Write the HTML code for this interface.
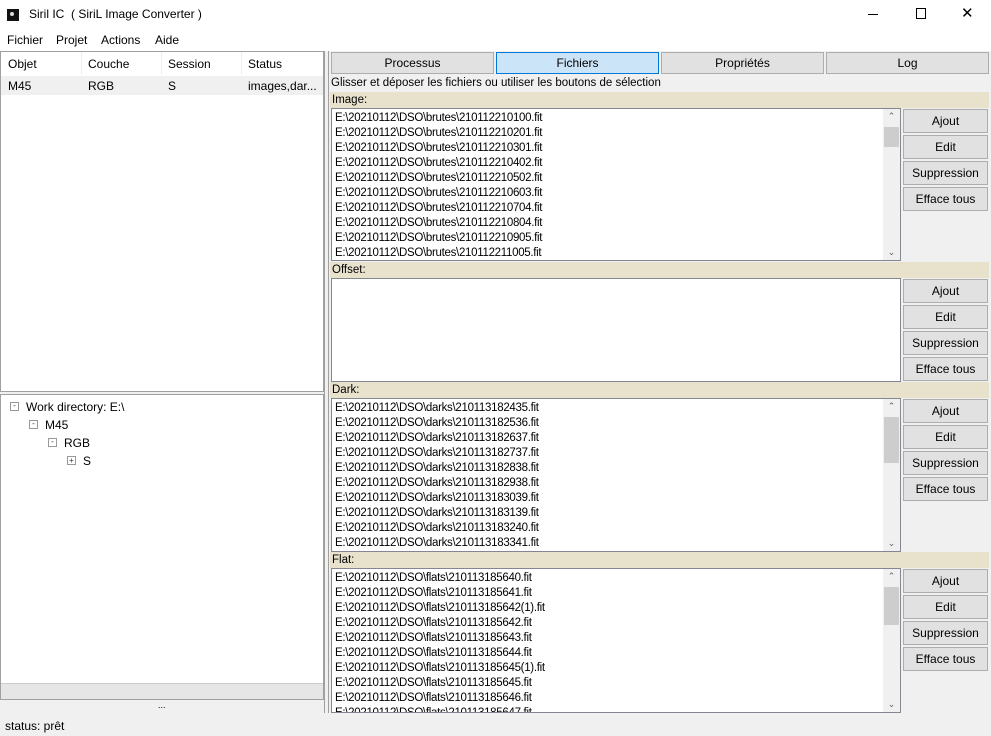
<!DOCTYPE html>
<html><head><meta charset="utf-8"><style>
*{box-sizing:border-box;margin:0;padding:0}
body{width:991px;height:736px;position:relative;background:#f0f0f0;font-family:"Liberation Sans",sans-serif;font-size:12px;color:#000;overflow:hidden}
.a{position:absolute}
.lst{position:absolute;left:331px;width:570px;background:#fff;border:1px solid #828790;overflow:hidden;padding-top:2px}
.lst div.t{height:15px;line-height:15px;padding-left:3px;font-size:11.5px;letter-spacing:-0.3px;white-space:nowrap}
.sb{position:absolute;right:0;top:0;bottom:0;width:17px;background:#f0f0f0}
.th{position:absolute;left:1px;width:15px;height:20px;top:18px;background:#cdcdcd}
.ar{position:absolute;left:0;width:17px;text-align:center;font-size:9px;color:#606060}
.band{position:absolute;left:330px;width:659px;height:16px;background:#e8e2cc;line-height:16px;padding-left:2px;font-size:11.5px}
.btn{position:absolute;left:903px;width:85px;height:24px;background:#e1e1e1;border:1px solid #adadad;text-align:center;line-height:22px;font-size:12px}
.tab{position:absolute;top:52px;height:22px;background:#e1e1e1;border:1px solid #adadad;text-align:center;line-height:20px}
</style></head><body>
<div class="a" style="left:0;top:0;width:991px;height:51px;background:#fff"></div>
<div class="a" style="left:7px;top:9px;width:12px;height:12px;background:#111"></div>
<div class="a" style="left:10px;top:12px;width:4px;height:4px;background:#ddd;border-radius:2px"></div>
<div class="a" style="left:29px;top:7px;font-size:12px">Siril IC &nbsp;( SiriL Image Converter )</div>
<div class="a" style="left:868px;top:14px;width:10px;height:1px;background:#000"></div>
<div class="a" style="left:916px;top:8px;width:10px;height:11px;border:1px solid #000"></div>
<div class="a" style="left:961px;top:4px;font-size:15px;font-weight:300">&#10005;</div>
<div class="a" style="left:7px;top:33px">Fichier</div>
<div class="a" style="left:56px;top:33px">Projet</div>
<div class="a" style="left:101px;top:33px">Actions</div>
<div class="a" style="left:155px;top:33px">Aide</div>
<!-- left table -->
<div class="a" style="left:0;top:51px;width:324px;height:341px;background:#fff;border:1px solid #a0a0a0"></div>
<div class="a" style="left:1px;top:76px;width:322px;height:19px;background:#f0f0f0"></div>
<div class="a" style="left:81px;top:52px;width:1px;height:23px;background:#eee"></div>
<div class="a" style="left:161px;top:52px;width:1px;height:23px;background:#eee"></div>
<div class="a" style="left:241px;top:52px;width:1px;height:23px;background:#eee"></div>
<div class="a" style="left:8px;top:57px">Objet</div><div class="a" style="left:88px;top:57px">Couche</div><div class="a" style="left:168px;top:57px">Session</div><div class="a" style="left:248px;top:57px">Status</div>
<div class="a" style="left:8px;top:79px">M45</div><div class="a" style="left:88px;top:79px">RGB</div><div class="a" style="left:168px;top:79px">S</div><div class="a" style="left:248px;top:79px">images,dar...</div>
<!-- tree -->
<div class="a" style="left:0;top:394px;width:324px;height:306px;background:#fff;border:1px solid #a0a0a0"></div>
<div class="a" style="left:1px;top:683px;width:322px;height:16px;background:#e6e6e6;border-top:1px solid #ccc"></div>
<div class="a" style="left:10px;top:402px;width:9px;height:9px;border:1px solid #999;font-size:8px;line-height:6px;text-align:center;color:#333">-</div>
<div class="a" style="left:26px;top:400px">Work directory: E:\</div>
<div class="a" style="left:29px;top:420px;width:9px;height:9px;border:1px solid #999;font-size:8px;line-height:6px;text-align:center;color:#333">-</div>
<div class="a" style="left:45px;top:418px">M45</div>
<div class="a" style="left:48px;top:438px;width:9px;height:9px;border:1px solid #999;font-size:8px;line-height:6px;text-align:center;color:#333">-</div>
<div class="a" style="left:64px;top:436px">RGB</div>
<div class="a" style="left:67px;top:456px;width:9px;height:9px;border:1px solid #999;font-size:8px;line-height:7px;text-align:center;color:#333">+</div>
<div class="a" style="left:83px;top:454px">S</div>
<div class="a" style="left:158px;top:700px;font-size:9px">...</div>
<div class="a" style="left:324px;top:51px;width:1px;height:662px;background:#a0a0a0"></div>
<div class="a" style="left:328px;top:51px;width:1px;height:662px;background:#a0a0a0"></div>
<!-- tabs -->
<div class="tab" style="left:331px;width:163px">Processus</div>
<div class="tab" style="left:496px;width:163px;background:#cce4f7;border-color:#0078d7">Fichiers</div>
<div class="tab" style="left:661px;width:163px">Propriétés</div>
<div class="tab" style="left:826px;width:163px">Log</div>
<div class="a" style="left:331px;top:77px;font-size:11.5px">Glisser et déposer les fichiers ou utiliser les boutons de sélection</div>

<div class="band" style="top:92px">Image:</div>
<div class="lst" style="top:108px;height:153px">
<div class="t">E:\20210112\DSO\brutes\210112210100.fit</div><div class="t">E:\20210112\DSO\brutes\210112210201.fit</div><div class="t">E:\20210112\DSO\brutes\210112210301.fit</div><div class="t">E:\20210112\DSO\brutes\210112210402.fit</div><div class="t">E:\20210112\DSO\brutes\210112210502.fit</div><div class="t">E:\20210112\DSO\brutes\210112210603.fit</div><div class="t">E:\20210112\DSO\brutes\210112210704.fit</div><div class="t">E:\20210112\DSO\brutes\210112210804.fit</div><div class="t">E:\20210112\DSO\brutes\210112210905.fit</div><div class="t">E:\20210112\DSO\brutes\210112211005.fit</div>
<div class="sb"><div class="ar" style="top:2px">&#8963;</div><div class="th"></div><div class="ar" style="bottom:2px">&#8964;</div></div></div>
<div class="btn" style="top:109px">Ajout</div><div class="btn" style="top:135px">Edit</div><div class="btn" style="top:161px">Suppression</div><div class="btn" style="top:187px">Efface tous</div>

<div class="band" style="top:262px">Offset:</div>
<div class="lst" style="top:278px;height:104px"></div>
<div class="btn" style="top:279px">Ajout</div><div class="btn" style="top:305px">Edit</div><div class="btn" style="top:331px">Suppression</div><div class="btn" style="top:357px">Efface tous</div>

<div class="band" style="top:382px">Dark:</div>
<div class="lst" style="top:398px;height:154px">
<div class="t">E:\20210112\DSO\darks\210113182435.fit</div><div class="t">E:\20210112\DSO\darks\210113182536.fit</div><div class="t">E:\20210112\DSO\darks\210113182637.fit</div><div class="t">E:\20210112\DSO\darks\210113182737.fit</div><div class="t">E:\20210112\DSO\darks\210113182838.fit</div><div class="t">E:\20210112\DSO\darks\210113182938.fit</div><div class="t">E:\20210112\DSO\darks\210113183039.fit</div><div class="t">E:\20210112\DSO\darks\210113183139.fit</div><div class="t">E:\20210112\DSO\darks\210113183240.fit</div><div class="t">E:\20210112\DSO\darks\210113183341.fit</div>
<div class="sb"><div class="ar" style="top:2px">&#8963;</div><div class="th" style="height:46px"></div><div class="ar" style="bottom:2px">&#8964;</div></div></div>
<div class="btn" style="top:399px">Ajout</div><div class="btn" style="top:425px">Edit</div><div class="btn" style="top:451px">Suppression</div><div class="btn" style="top:477px">Efface tous</div>

<div class="band" style="top:552px">Flat:</div>
<div class="lst" style="top:568px;height:145px">
<div class="t">E:\20210112\DSO\flats\210113185640.fit</div><div class="t">E:\20210112\DSO\flats\210113185641.fit</div><div class="t">E:\20210112\DSO\flats\210113185642(1).fit</div><div class="t">E:\20210112\DSO\flats\210113185642.fit</div><div class="t">E:\20210112\DSO\flats\210113185643.fit</div><div class="t">E:\20210112\DSO\flats\210113185644.fit</div><div class="t">E:\20210112\DSO\flats\210113185645(1).fit</div><div class="t">E:\20210112\DSO\flats\210113185645.fit</div><div class="t">E:\20210112\DSO\flats\210113185646.fit</div><div class="t">E:\20210112\DSO\flats\210113185647.fit</div>
<div class="sb"><div class="ar" style="top:2px">&#8963;</div><div class="th" style="height:38px"></div><div class="ar" style="bottom:2px">&#8964;</div></div></div>
<div class="btn" style="top:569px">Ajout</div><div class="btn" style="top:595px">Edit</div><div class="btn" style="top:621px">Suppression</div><div class="btn" style="top:647px">Efface tous</div>

<div class="a" style="left:0;top:713px;width:991px;height:23px;background:#f0f0f0"></div>
<div class="a" style="left:5px;top:719px">status: prêt</div>
</body></html>
